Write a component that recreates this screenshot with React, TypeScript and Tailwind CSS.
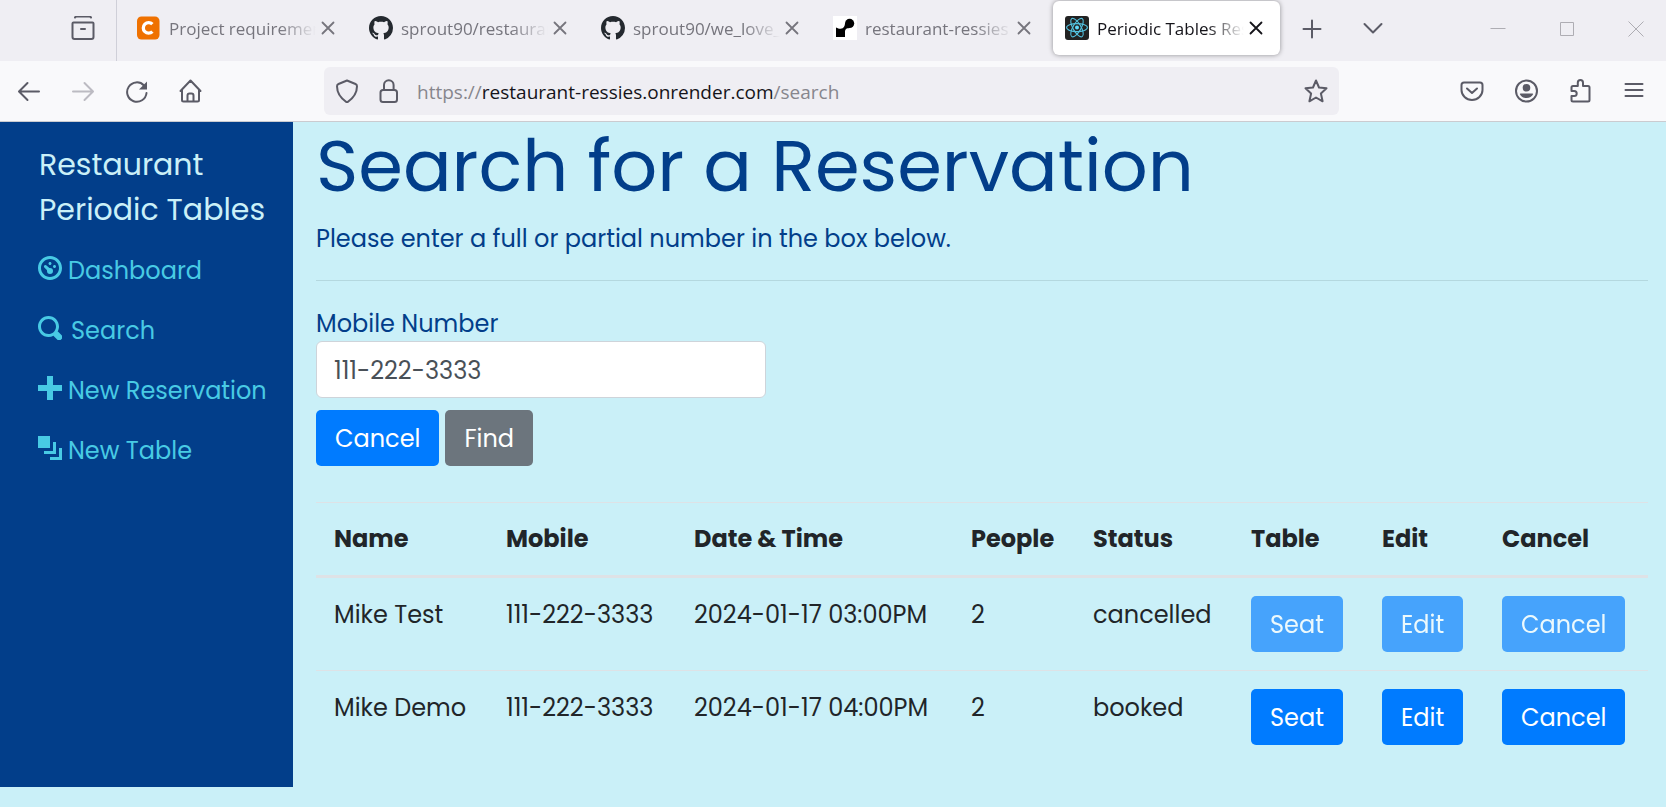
import type { ReactNode } from "react";

const line = {
  fill: "none",
  stroke: "currentColor",
  strokeWidth: 2,
  strokeLinecap: "round",
  strokeLinejoin: "round",
} as const;

function Icon({ children, className = "size-6" }: { children: ReactNode; className?: string }) {
  return (
    <svg viewBox="0 0 24 24" className={className} aria-hidden="true">
      {children}
    </svg>
  );
}

function CloseIcon() {
  return (
    <Icon className="size-6 shrink-0">
      <path {...line} strokeWidth={1.8} d="M6.5 6.5l11 11M17.5 6.5l-11 11" />
    </Icon>
  );
}

function CourseIcon() {
  return (
    <Icon className="size-6 shrink-0">
      <rect x="0" y="0.5" width="22.5" height="23" rx="4.5" fill="#ef7100" />
      <path d="M15.400 8.200A5.300 5.300 0 1 0 15.400 15.600" fill="none" stroke="#fff" strokeWidth="3.300" />
    </Icon>
  );
}

function GithubIcon() {
  return (
    <svg viewBox="0 0 16 16" className="size-6 shrink-0" aria-hidden="true">
      <path
        fill="#24292f"
        fillRule="evenodd"
        d="M8 0C3.58 0 0 3.58 0 8c0 3.54 2.29 6.53 5.47 7.59.4.07.55-.17.55-.38 0-.19-.01-.82-.01-1.49-2.01.37-2.53-.49-2.69-.94-.09-.23-.48-.94-.82-1.13-.28-.15-.68-.52-.01-.53.63-.01 1.08.58 1.23.82.72 1.21 1.87.87 2.33.66.07-.52.28-.87.51-1.07-1.78-.2-3.64-.89-3.64-3.95 0-.87.31-1.59.82-2.15-.08-.2-.36-1.02.08-2.12 0 0 .67-.21 2.2.82.64-.18 1.32-.27 2-.27s1.36.09 2 .27c1.53-1.04 2.2-.82 2.2-.82.44 1.1.16 1.92.08 2.12.51.56.82 1.27.82 2.15 0 3.07-1.87 3.75-3.65 3.95.29.25.54.73.54 1.48 0 1.07-.01 1.93-.01 2.2 0 .21.15.46.55.38A8.01 8.01 0 0 0 16 8c0-4.42-3.58-8-8-8z"
      />
    </svg>
  );
}

function RenderIcon() {
  return (
    <Icon className="size-6 shrink-0">
      <rect width="24" height="24" fill="#fff" />
      <circle cx="16.6" cy="7.4" r="4.6" fill="#000" />
      <path d="M3 11.5l3 1.2h1.5c3.6 0 4.2-2.6 4.6-5.6l4.5 4.9c-3.2.3-4.6 1-4.6 4V21H3z" fill="#000" />
    </Icon>
  );
}

function ReactIcon() {
  return (
    <Icon className="size-6 shrink-0">
      <rect width="24" height="24" rx="3" fill="#222" />
      <circle cx="12" cy="11.6" r="2" fill="#61dafb" />
      <g fill="none" stroke="#53c1de" strokeWidth="1.1">
        <ellipse cx="12" cy="11.6" rx="10.4" ry="4" />
        <ellipse cx="12" cy="11.6" rx="10.4" ry="4" transform="rotate(60 12 11.6)" />
        <ellipse cx="12" cy="11.6" rx="10.4" ry="4" transform="rotate(120 12 11.6)" />
      </g>
    </Icon>
  );
}

const tabs = [
  { id: 1, title: "Project requiremen", icon: <CourseIcon /> },
  { id: 2, title: "sprout90/restauran", icon: <GithubIcon /> },
  { id: 3, title: "sprout90/we_love_", icon: <GithubIcon /> },
  { id: 4, title: "restaurant-ressies", icon: <RenderIcon /> },
  { id: 5, title: "Periodic Tables Res", icon: <ReactIcon />, active: true },
];

function TabStrip() {
  return (
    <div className="flex h-[61px] items-start bg-[#efeef3] text-[#5b5b66]">
      <div className="flex h-full w-[117px] shrink-0 justify-end border-r border-[#cfcfd8] pr-[21px]">
        <button type="button" aria-label="Recently closed" className="h-14">
          <Icon className="size-6">
            <path {...line} d="M4 1.500q.5-1 1.500-1h13q1 0 1.500 1M2.500 6.500h19q1 0 1 1V21q0 2-2 2H3.500q-2 0-2-2V7.500q0-1 1-1zM10 13h4" />
          </Icon>
        </button>
      </div>
      <div className="flex min-w-0 pl-2 pt-px">
        {tabs.map((tab) => (
          <div
            key={tab.id}
            className={
              tab.active
                ? "mr-[5px] flex h-[54px] w-[227px] min-w-0 items-center rounded-md bg-white px-3 text-[#15141a] shadow-[0_0_5px_rgba(0,0,0,0.4)]"
                : "mr-[5px] flex h-[54px] w-[227px] min-w-0 items-center rounded-md px-3 text-[#76757d]"
            }
          >
            {tab.icon}
            <span className="ml-2 mr-auto w-[147px] overflow-hidden whitespace-nowrap pt-0.5 text-[17px] [mask-image:linear-gradient(to_right,black_75%,transparent)]">
              {tab.title}
            </span>
            <button type="button" aria-label="Close tab">
              <CloseIcon />
            </button>
          </div>
        ))}
      </div>
      <div className="flex h-[57px] items-center gap-[37px] pl-[15px]">
        <button type="button" aria-label="New tab">
          <Icon>
            <path {...line} d="M12 3.500v17M3.500 12h17" />
          </Icon>
        </button>
        <button type="button" aria-label="List all tabs">
          <Icon>
            <path {...line} d="M3.500 7l8.500 8.500 8.500-8.500" />
          </Icon>
        </button>
      </div>
      <div className="ml-auto flex h-[57px] items-center gap-[45px] pr-[18px] text-[#aeadb3]">
        <button type="button" aria-label="Minimize">
          <Icon>
            <path d="M4.500 11.500h15" stroke="currentColor" />
          </Icon>
        </button>
        <button type="button" aria-label="Maximize">
          <Icon>
            <path d="M5.500 5.500h13v13h-13z" fill="none" stroke="currentColor" />
          </Icon>
        </button>
        <button type="button" aria-label="Close window">
          <Icon>
            <path d="M4.500 4.500l15 15M19.500 4.500l-15 15" fill="none" stroke="currentColor" />
          </Icon>
        </button>
      </div>
    </div>
  );
}

function Toolbar() {
  return (
    <div className="flex h-[61px] items-center border-b border-[#cbcbd0] bg-[#f9f9fb] text-[#5b5b66]">
      <div className="flex w-[324px] shrink-0 gap-[30px] pl-[17px]">
        <button type="button" aria-label="Back">
          <Icon>
            <path {...line} d="M22 12.500H2.500M10.500 4L2 12.500l8.500 8.500" />
          </Icon>
        </button>
        <button type="button" aria-label="Forward" className="text-[#bcbbc2]">
          <Icon>
            <path {...line} d="M2 12.500h19.500M13.500 4L22 12.500l-8.500 8.500" />
          </Icon>
        </button>
        <button type="button" aria-label="Reload">
          <Icon>
            <path {...line} d="M21.500 14A9.700 9.700 0 1 1 19 6.500" />
            <path d="M22 2.500v8h-8z" fill="currentColor" />
          </Icon>
        </button>
        <button type="button" aria-label="Home">
          <Icon>
            <path {...line} d="M1.500 12L11.500 1.500 21.500 12M3 10.500V21q0 1.500 1.500 1.500h14q1.500 0 1.500-1.500V10.500M8.500 22.500v-6q0-2 2-2h2q2 0 2 2v6" />
          </Icon>
        </button>
      </div>
      <div className="flex h-12 max-w-[1015px] flex-1 items-center rounded-md bg-[#efeef3] pl-[11px] pr-[11px]">
        <Icon>
          <path {...line} d="M12 1.500l8.500 3.500q1.500.6 1.500 2.200C22 14 18 19.500 12 23.500 6 19.500 2 14 2 7.200 2 5.600 3.500 5 3.500 5z" />
        </Icon>
        <Icon className="ml-[18px] size-6">
          <rect {...line} x="3.500" y="11" width="16.500" height="12" rx="2.500" />
          <path {...line} d="M7 10.500V6a4.800 4.800 0 0 1 9.600 0v4.500" />
        </Icon>
        <div className="ml-4 mr-auto whitespace-nowrap pt-0.5 text-[19px] text-[#87868d]">
          https://<span className="text-[#15141a]">restaurant-ressies.onrender.com</span>/search
        </div>
        <button type="button" aria-label="Bookmark this page">
          <Icon>
            <path {...line} d="M12 1.500l3 7 7.500.8-5.600 5.200 1.700 7.800L12 18.500l-6.600 3.800 1.700-7.800L1.500 9.300 9 8.500z" />
          </Icon>
        </button>
      </div>
      <div className="ml-auto flex gap-[30px] pr-5">
        <button type="button" aria-label="Save to Pocket">
          <Icon>
            <path {...line} d="M4 3.500h16q2.500 0 2.500 2.500v5a10.500 10 0 0 1-21 0V6Q1.500 3.500 4 3.500zM7 9.500l5 4.500 5-4.500" />
          </Icon>
        </button>
        <button type="button" aria-label="Account">
          <Icon>
            <circle {...line} cx="12.500" cy="12" r="10.500" />
            <circle cx="12.500" cy="8.800" r="3.800" fill="currentColor" />
            <path d="M6.500 14.500h12q.8 0 .6.800-1.800 3.700-6.600 3.700t-6.600-3.700q-.2-.8.600-.8z" fill="currentColor" />
          </Icon>
        </button>
        <button type="button" aria-label="Extensions">
          <Icon>
            <path {...line} d="M3.500 12V8.500Q3.500 7 5 7h4.800V3.700a2.600 2.600 0 0 1 5.200 0V7H20q1.500 0 1.500 1.500V21q0 1.500-1.500 1.500H5Q3.500 22.500 3.500 21v-4h2.700a2.500 2.500 0 0 0 0-5z" />
          </Icon>
        </button>
        <button type="button" aria-label="Open application menu">
          <Icon>
            <path {...line} d="M3.500 5h17M3.500 11h17M3.500 17h17" />
          </Icon>
        </button>
      </div>
    </div>
  );
}

function Glyph({ d }: { d: string }) {
  return (
    <svg viewBox="0 0 8 8" className="mb-1.5 size-6 shrink-0" fill="currentColor" aria-hidden="true">
      <path d={d} />
    </svg>
  );
}

const links = [
  {
    label: "Dashboard",
    d: "M4 0C1.800 0 0 1.800 0 4s1.800 4 4 4 4-1.800 4-4-1.800-4-4-4zm0 1c1.660 0 3 1.340 3 3S5.660 7 4 7 1 5.660 1 4s1.340-3 3-3zm0 1c-.28 0-.5.22-.5.5s.22.500.5.500.5-.22.500-.5-.22-.5-.5-.5zm-1.560 1a.5.500 0 0 0-.34.840l.91.930A1 1 0 0 0 3 5a1 1 0 1 0 2 0 1 1 0 0 0-1-1l-.2.030-.97-.89A.5.500 0 0 0 2.440 3zM5.500 3c-.28 0-.5.22-.5.500s.22.500.5.500.5-.22.500-.5-.22-.5-.5-.5z",
  },
  {
    label: "Search",
    d: "M3.500 0C1.570 0 0 1.570 0 3.500S1.570 7 3.500 7c.59 0 1.170-.14 1.660-.41a1 1 0 0 0 .13.130l1 1a1.020 1.020 0 1 0 1.440-1.440l-1-1a1 1 0 0 0-.16-.13C6.840 4.660 7 4.100 7 3.500 7 1.570 5.450 0 3.500 0zm0 1C4.890 1 6 2.110 6 3.500c0 .66-.24 1.270-.66 1.720l-.03.030a1 1 0 0 0-.13.130C4.740 5.770 4.150 6 3.500 6 2.110 6 1 4.890 1 3.500S2.110 1 3.500 1z",
  },
  { label: "New Reservation", d: "M3 0v3H0v2h3v3h2V5h3V3H5V0z" },
  { label: "New Table", d: "M0 0v4h4V0zm5 2v3H2v1h4V2zm2 2v3H4v1h4V4z" },
];

function Sidebar() {
  return (
    <nav className="w-[293px] shrink-0 bg-[#023e8a] pl-[38px] pt-5">
      <a href="#home" className="block pl-px text-[30px] leading-[45px] text-[#caf0f8]">
        Restaurant
        <br />
        Periodic Tables
      </a>
      <ul className="mt-[9px] text-[#48cae4]">
        {links.map((link) => (
          <li key={link.label}>
            <a
              href="#nav"
              className={
                link.label === "Search"
                  ? "flex h-[60px] items-center gap-[9px] whitespace-nowrap"
                  : "flex h-[60px] items-center gap-1.5 whitespace-nowrap"
              }
            >
              <Glyph d={link.d} />
              {link.label}
            </a>
          </li>
        ))}
      </ul>
    </nav>
  );
}

function Button({
  children,
  tone = "primary",
  disabled = false,
}: {
  children: ReactNode;
  tone?: "primary" | "secondary";
  disabled?: boolean;
}) {
  return (
    <button
      type="button"
      disabled={disabled}
      className={
        tone === "primary"
          ? "block h-14 rounded-[5px] bg-[#007bff] px-[19px] pt-0.5 text-white disabled:opacity-65"
          : "block h-14 rounded-[5px] bg-[#6c757d] px-[19px] pt-0.5 text-white"
      }
    >
      {children}
    </button>
  );
}

const reservations = [
  { name: "Mike Test", mobile: "111-222-3333", time: "2024-01-17 03:00PM", people: 2, status: "cancelled" },
  { name: "Mike Demo", mobile: "111-222-3333", time: "2024-01-17 04:00PM", people: 2, status: "booked" },
];

function ReservationTable() {
  return (
    <table className="mt-9 w-full table-fixed border-separate border-spacing-0 text-left leading-[38px] text-[#212529]">
      <colgroup>
        <col className="w-[172px]" />
        <col className="w-[188px]" />
        <col className="w-[277px]" />
        <col className="w-[122px]" />
        <col className="w-[158px]" />
        <col className="w-[131px]" />
        <col className="w-[120px]" />
        <col className="w-[164px]" />
      </colgroup>
      <thead>
        <tr>
          {["Name", "Mobile", "Date & Time", "People", "Status", "Table", "Edit", "Cancel"].map((h) => (
            <th
              key={h}
              className="whitespace-nowrap border-b-[3px] border-t border-[#dee2e6] py-[17px] pl-[18px] font-bold"
            >
              {h}
            </th>
          ))}
        </tr>
      </thead>
      <tbody className="align-top [&>tr+tr>td]:border-t [&_td]:whitespace-nowrap [&_td]:border-[#dee2e6] [&_td]:py-[18px] [&_td]:pl-[18px]">
        {reservations.map((r) => {
          const off = r.status === "cancelled";
          return (
            <tr key={r.name}>
              <td>{r.name}</td>
              <td>{r.mobile}</td>
              <td>{r.time}</td>
              <td>{r.people}</td>
              <td>{r.status}</td>
              <td>
                <Button disabled={off}>Seat</Button>
              </td>
              <td>
                <Button disabled={off}>Edit</Button>
              </td>
              <td>
                <Button disabled={off}>Cancel</Button>
              </td>
            </tr>
          );
        })}
      </tbody>
    </table>
  );
}

export default function App() {
  return (
    <div className="min-h-screen bg-[#caf0f8]">
      <header className="font-['Open_Sans',sans-serif]">
        <TabStrip />
        <Toolbar />
      </header>
      <div className="flex font-['Poppins','Inter',sans-serif] text-[24px]">
        <Sidebar />
        <main className="min-w-0 flex-1 pb-6 pl-[23px] pr-[18px] text-[#023e8a]">
          <h1 className="text-[72px] leading-[88px]">Search for a Reservation</h1>
          <p className="mt-3 leading-[34px]">Please enter a full or partial number in the box below.</p>
          <hr className="mb-[26px] mt-6 border-[#b4d8df]" />
          <form>
            <label htmlFor="mobile" className="block leading-[34px]">
              Mobile Number
            </label>
            <input
              id="mobile"
              type="text"
              defaultValue="111-222-3333"
              className="block h-[57px] w-[450px] rounded-md border border-[#ced4da] bg-white px-[17px] pt-0.5 text-[#495057]"
            />
            <div className="mt-3 flex gap-1.5">
              <Button>Cancel</Button>
              <Button tone="secondary">Find</Button>
            </div>
          </form>
          <ReservationTable />
        </main>
      </div>
    </div>
  );
}
